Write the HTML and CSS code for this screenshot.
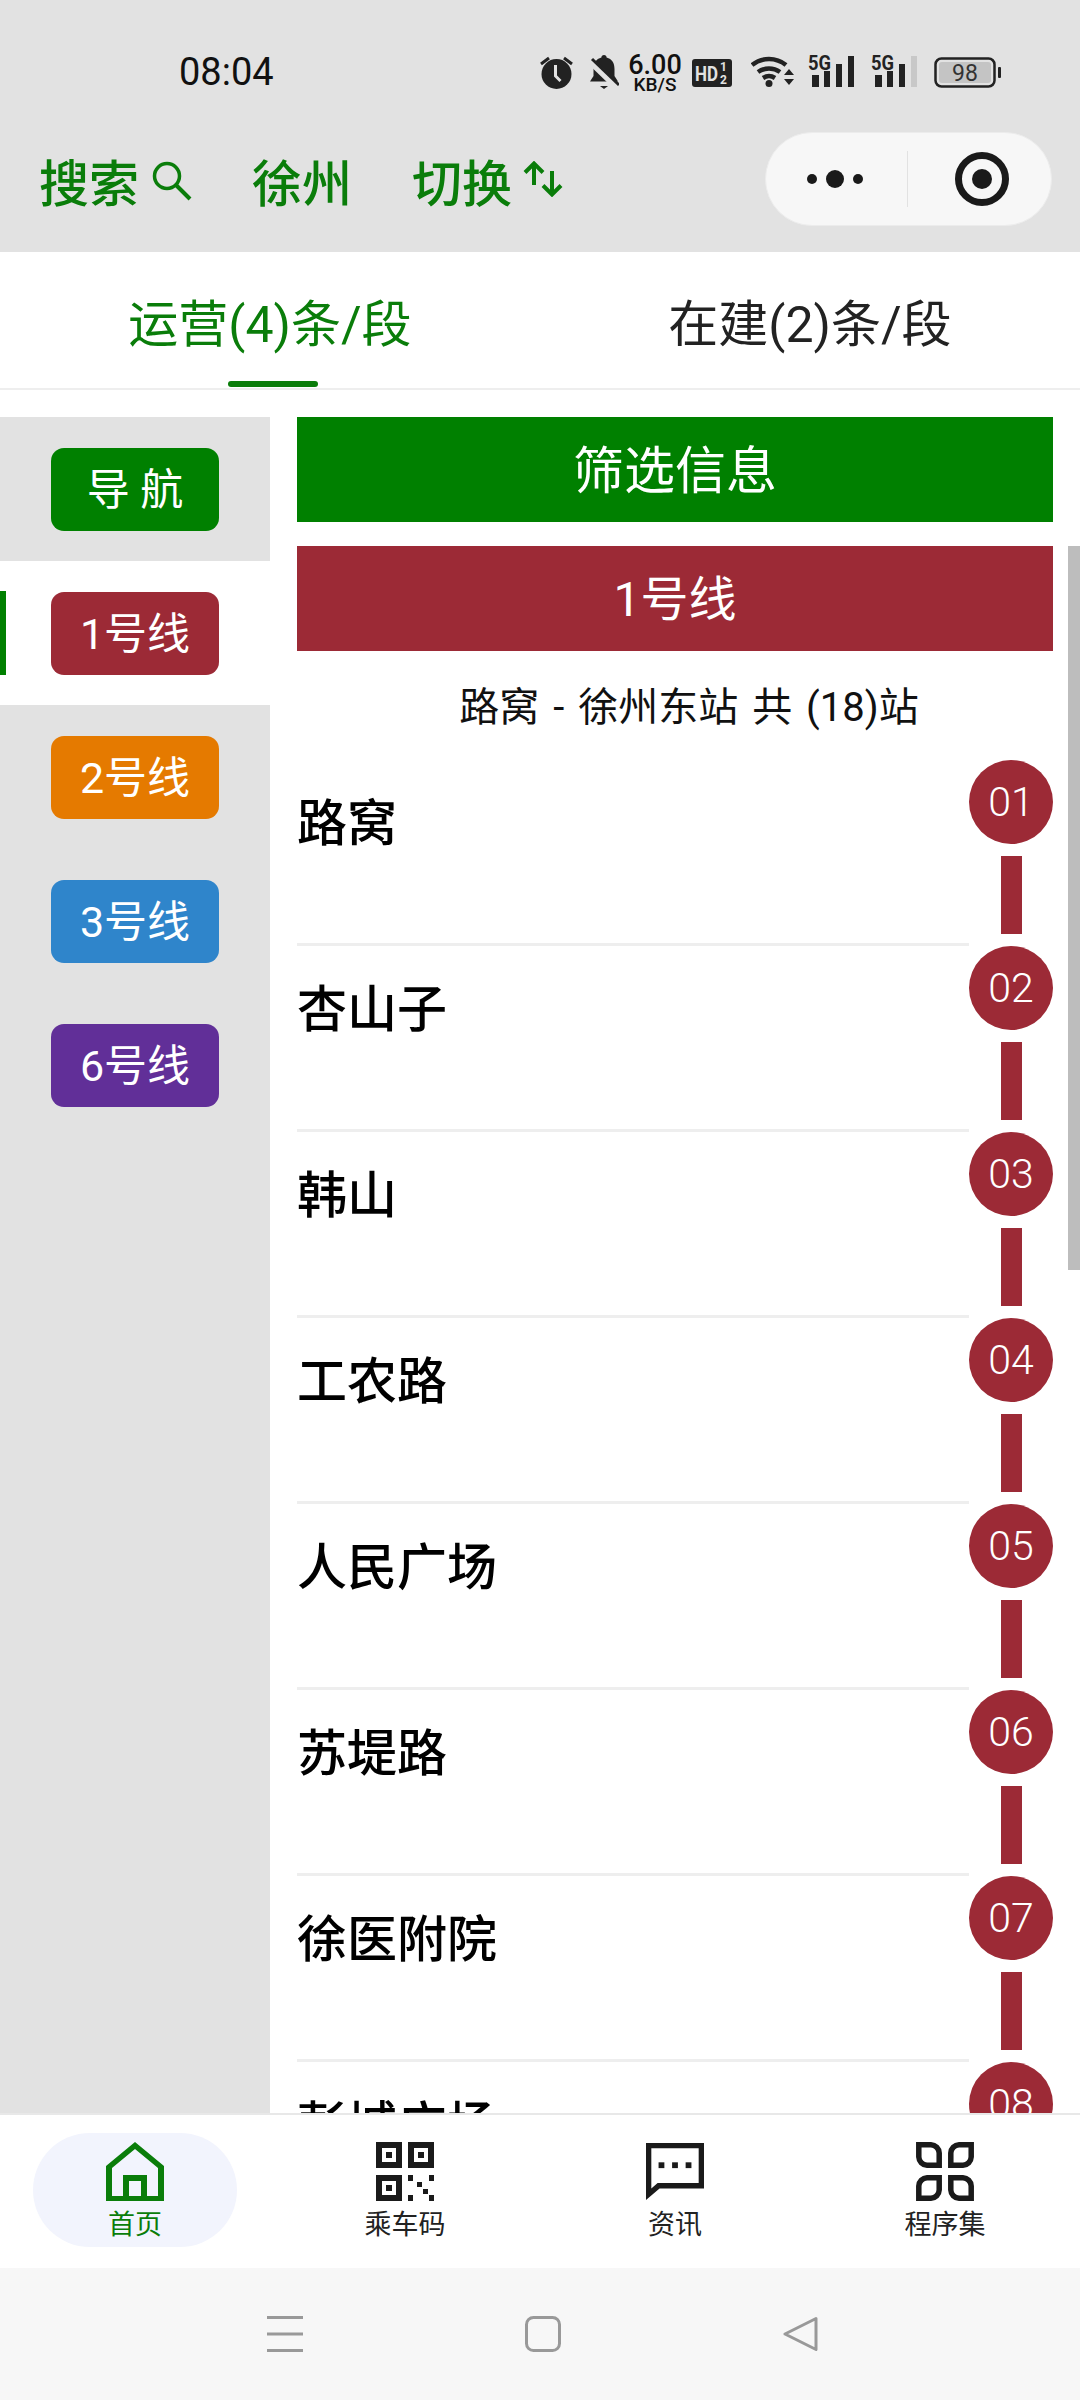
FILE: index.html
```html
<!DOCTYPE html>
<html lang="zh-CN">
<head>
    <meta charset="UTF-8">
    <meta name="viewport" content="width=device-width, initial-scale=1.0">
    <title>徐州地铁</title>
    <link rel="stylesheet" href="styles.css">
</head>
<body>

    <!-- Barra de status + cabeçalho -->
    <div class="topo">
        <div class="status">
            <span class="hora">08:04</span>
            <div class="status-icones">
                <svg class="ic-alarme" viewBox="0 0 33 34"><circle cx="16.500" cy="19" r="15" fill="#222"/><path d="M1 9 9 3M24 3l8 6" stroke="#222" stroke-width="3" fill="none"/><path d="M15.500 10v11l5 5" stroke="#e2e2e2" stroke-width="3" fill="none"/></svg>
                <svg class="ic-sino" viewBox="0 0 30 34"><path d="M15 0c1.600 0 2.600 1 2.600 2.600C23 4 25.500 8 25.500 14v7l3.500 5.500H1L4.500 21v-7C4.500 8 7 4 12.400 2.600 12.400 1 13.400 0 15 0z" fill="#222"/><path d="M11 31h8l-4 3z" fill="#222"/><path d="M0 5 27 31" stroke="#e2e2e2" stroke-width="7"/><path d="M3 4 30 30" stroke="#222" stroke-width="3"/></svg>
                <div class="velocidade"><span class="vel-num">6.00</span><span class="vel-un">KB/S</span></div>
                <svg class="ic-hd" viewBox="0 0 40 28"><rect width="40" height="28" rx="3" fill="#222"/><text x="3" y="22" font-size="21" font-weight="700" fill="#e2e2e2" textLength="23" lengthAdjust="spacingAndGlyphs">HD</text><text x="28" y="12" font-size="12" font-weight="700" fill="#e2e2e2">1</text><text x="28" y="25" font-size="12" font-weight="700" fill="#e2e2e2">2</text></svg>
                <svg class="ic-wifi" viewBox="0 0 44 33"><g fill="none" stroke="#222" stroke-width="4.500"><path d="M1 11A27 27 0 0 1 35 11"/><path d="M7 18A19 19 0 0 1 29 18"/><path d="M12 24A11 11 0 0 1 24 24"/></g><circle cx="18" cy="29.500" r="3.500" fill="#222"/><path d="M33 21 38 15 43 21zM33 25 38 31 43 25z" fill="#222"/></svg>
                <svg class="ic-sinal" viewBox="0 0 46 33"><text x="0" y="16" font-size="20" font-weight="700" fill="#222" textLength="23" lengthAdjust="spacingAndGlyphs">5G</text><g fill="#222"><rect x="4" y="21" width="7" height="12"/><rect x="16" y="17" width="6" height="16"/><rect x="28" y="10" width="6" height="23"/><rect x="40" y="2" width="6" height="31"/></g></svg>
                <svg class="ic-sinal ic-sinal2" viewBox="0 0 46 33"><text x="0" y="16" font-size="20" font-weight="700" fill="#222" textLength="23" lengthAdjust="spacingAndGlyphs">5G</text><g fill="#222"><rect x="4" y="21" width="7" height="12"/><rect x="16" y="17" width="6" height="16"/><rect x="28" y="10" width="6" height="23"/></g><rect x="40" y="2" width="6" height="31" fill="#c8c8c8"/></svg>
                <svg class="ic-bateria" viewBox="0 0 67 31"><rect x="1.500" y="1.500" width="59" height="28" rx="6" fill="none" stroke="#222" stroke-width="2.500"/><rect x="5" y="5" width="52" height="21" rx="3" fill="#c4c4c4"/><rect x="64" y="10" width="3" height="11" rx="1" fill="#222"/><text x="31" y="24" font-size="23" fill="#333" text-anchor="middle">98</text></svg>
            </div>
        </div>
        <div class="cabecalho">
            <span class="link-topo">搜索</span>
            <svg class="ic-busca" viewBox="0 0 40 40"><circle cx="15" cy="15" r="12.500" fill="none" stroke="#0a7d0a" stroke-width="3.500"/><path d="M24 24 38 38" stroke="#0a7d0a" stroke-width="4"/></svg>
            <span class="link-topo cidade">徐州</span>
            <span class="link-topo trocar">切换</span>
            <svg class="ic-trocar" viewBox="0 0 40 36"><g fill="none" stroke="#0a7d0a" stroke-width="4"><path d="M11 3V24M2 11.500 11 2.500l9 9"/><path d="M29 10V33M20 24.500l9 9 9-9"/></g></svg>
            <div class="capsula">
                <svg class="ic-pontos" viewBox="0 0 56 20"><circle cx="5" cy="10" r="5" fill="#1a1a1a"/><circle cx="28" cy="10" r="9" fill="#1a1a1a"/><circle cx="51" cy="10" r="5" fill="#1a1a1a"/></svg>
                <span class="divisor"></span>
                <svg class="ic-alvo" viewBox="0 0 54 54"><circle cx="27" cy="27" r="23.500" fill="none" stroke="#1a1a1a" stroke-width="7"/><circle cx="27" cy="27" r="10" fill="#1a1a1a"/></svg>
            </div>
        </div>
    </div>

    <!-- Abas -->
    <div class="abas">
        <div class="aba ativa">运营(4)条/段</div>
        <div class="aba">在建(2)条/段</div>
    </div>

    <div class="principal">
        <!-- Menu lateral -->
        <div class="lateral">
            <div class="item-lateral"><span class="botao-linha verde">导 航</span></div>
            <div class="item-lateral selecionado"><span class="botao-linha vermelho">1号线</span></div>
            <div class="item-lateral"><span class="botao-linha laranja">2号线</span></div>
            <div class="item-lateral"><span class="botao-linha azul">3号线</span></div>
            <div class="item-lateral"><span class="botao-linha roxo">6号线</span></div>
        </div>

        <!-- Lista de estações -->
        <div class="conteudo">
            <div class="faixa faixa-filtro verde">筛选信息</div>
            <div class="faixa vermelho">1号线</div>
            <div class="resumo">路窝 - 徐州东站 共 (18)站</div>

            <div class="estacao"><div class="nome">路窝</div><div class="trilho"><span class="numero">01</span><span class="ligacao"></span></div></div>
            <div class="estacao"><div class="nome">杏山子</div><div class="trilho"><span class="numero">02</span><span class="ligacao"></span></div></div>
            <div class="estacao"><div class="nome">韩山</div><div class="trilho"><span class="numero">03</span><span class="ligacao"></span></div></div>
            <div class="estacao"><div class="nome">工农路</div><div class="trilho"><span class="numero">04</span><span class="ligacao"></span></div></div>
            <div class="estacao"><div class="nome">人民广场</div><div class="trilho"><span class="numero">05</span><span class="ligacao"></span></div></div>
            <div class="estacao"><div class="nome">苏堤路</div><div class="trilho"><span class="numero">06</span><span class="ligacao"></span></div></div>
            <div class="estacao"><div class="nome">徐医附院</div><div class="trilho"><span class="numero">07</span><span class="ligacao"></span></div></div>
            <div class="estacao"><div class="nome">彭城广场</div><div class="trilho"><span class="numero">08</span><span class="ligacao"></span></div></div>
        </div>

        <div class="rolagem"></div>
    </div>

    <!-- Barra inferior -->
    <div class="rodape">
        <div class="tab tab-ativa">
            <svg class="ic-tab" viewBox="0 0 58 59"><path fill-rule="evenodd" fill="#0a7d0a" d="M29 0 58 24V59H0V24ZM29 7 6 26V54H17V33H41V54H52V26ZM23 39H35V54H23Z"/></svg>
            <span>首页</span>
        </div>
        <div class="tab">
            <svg class="ic-tab" viewBox="0 0 58 59"><g fill="none" stroke="#1a1a1a" stroke-width="6"><rect x="3" y="3" width="20" height="20"/><rect x="35" y="3" width="20" height="20"/><rect x="3" y="36" width="20" height="20"/></g><g fill="#1a1a1a"><rect x="10" y="10" width="6" height="6"/><rect x="42" y="10" width="6" height="6"/><rect x="10" y="43" width="6" height="6"/><rect x="32" y="33" width="5" height="6"/><rect x="53" y="33" width="5" height="6"/><rect x="41" y="40" width="5" height="5"/><rect x="47" y="47" width="5" height="5"/><rect x="32" y="53" width="5" height="6"/><rect x="53" y="53" width="5" height="6"/></g></svg>
            <span>乘车码</span>
        </div>
        <div class="tab">
            <svg class="ic-tab" viewBox="0 0 60 59"><path fill-rule="evenodd" fill="#1a1a1a" d="M0 0H60V47H14L0 59ZM5.500 5.500V47L12 41.500H54.500V5.500Z"/><g fill="#1a1a1a"><rect x="13" y="20" width="6" height="6"/><rect x="27" y="20" width="6" height="6"/><rect x="41" y="20" width="6" height="6"/></g></svg>
            <span>资讯</span>
        </div>
        <div class="tab">
            <svg class="ic-tab" viewBox="0 0 58 59"><g fill="none" stroke="#1a1a1a" stroke-width="5.500"><path d="M2.800 2.800H15A8.500 8.500 0 0 1 23.200 11V23.200H11A8.500 8.500 0 0 1 2.800 15Z"/><path d="M55.200 2.800H43A8.500 8.500 0 0 0 34.800 11V23.200H47A8.500 8.500 0 0 0 55.200 15Z"/><path d="M2.800 56.200H15A8.500 8.500 0 0 0 23.200 48V35.800H11A8.500 8.500 0 0 0 2.800 44Z"/><path d="M55.200 56.200H43A8.500 8.500 0 0 1 34.800 48V35.800H47A8.500 8.500 0 0 1 55.200 44Z"/></g></svg>
            <span>程序集</span>
        </div>
    </div>

    <!-- Barra de navegação do sistema -->
    <div class="navegacao">
        <svg class="ic-nav" viewBox="0 0 36 36"><path d="M0 1.500H36M0 18H36M0 34.500H36" stroke="#999" stroke-width="3"/></svg>
        <svg class="ic-nav" viewBox="0 0 36 36"><rect x="1.500" y="1.500" width="33" height="33" rx="7" fill="none" stroke="#999" stroke-width="3"/></svg>
        <svg class="ic-nav" viewBox="0 0 36 36"><path d="M33 2.500 2 18 33 33.500Z" fill="none" stroke="#999" stroke-width="3" stroke-linejoin="round"/></svg>
    </div>

</body>
</html>
```

FILE: styles.css
```css
* { margin: 0; padding: 0; box-sizing: border-box; font-family: Roboto, "Noto Sans CJK SC", sans-serif; }
svg { display: block; flex-shrink: 0; }
svg text { font-family: Roboto, sans-serif; }
body { width: 1080px; height: 2400px; overflow: hidden; background: #fff; color: #000; display: flex; flex-direction: column; }

/* topo */
.topo { background: #e2e2e2; height: 252px; flex-shrink: 0; }
.status { height: 132px; display: flex; align-items: flex-start; padding: 54px 79px 0 179px; }
.hora { font-size: 38px; line-height: 36px; color: #111; }
.status-icones { margin-left: auto; display: flex; align-items: flex-start; }
.ic-alarme { width: 33px; height: 34px; margin-top: 1px; }
.ic-sino { width: 30px; height: 34px; margin-top: 1px; margin-left: 16px; }
.velocidade { width: 50px; margin-left: 11px; display: flex; flex-direction: column; align-items: center; color: #111; }
.vel-num { font-size: 27px; font-weight: 500; line-height: 23px; }
.vel-un { font-size: 19px; font-weight: 500; line-height: 15px; }
.ic-hd { width: 40px; height: 28px; margin-left: 12px; margin-top: 5px; }
.ic-wifi { width: 44px; height: 33px; margin-left: 19px; }
.ic-sinal { width: 46px; height: 33px; margin-left: 13px; overflow: visible; }
.ic-sinal2 { margin-left: 17px; }
.ic-bateria { width: 67px; height: 31px; margin-left: 17px; margin-top: 3px; }

.cabecalho { height: 94px; display: flex; align-items: center; padding-left: 39px; }
.link-topo { color: #0a7d0a; font-size: 50px; font-weight: 500; line-height: 94px; padding-top: 12px; }
.ic-busca { width: 40px; height: 40px; margin-left: 13px; margin-top: 4px; }
.cidade { margin-left: 60px; }
.trocar { margin-left: 60px; }
.ic-trocar { width: 40px; height: 36px; margin-left: 11px; margin-top: 0; }
.capsula { width: 287px; height: 94px; margin-left: auto; margin-right: 28px; border-radius: 47px; background: #f7f7f7; border: 1px solid #ececec; display: flex; align-items: center; padding-left: 41px; }
.ic-pontos { width: 56px; height: 20px; }
.divisor { width: 1px; height: 56px; background: #e2e2e2; margin-left: 44px; }
.ic-alvo { width: 54px; height: 54px; margin-left: 47px; }

/* abas */
.abas { height: 138px; flex-shrink: 0; display: flex; border-bottom: 2px solid #eee; }
.aba { position: relative; width: 540px; text-align: center; font-size: 50px; line-height: 130px; padding-top: 8px; color: #222; }
.ativa { color: #0a7d0a; }
.ativa::after { content: ""; position: absolute; left: 228px; bottom: 1px; width: 90px; height: 6px; border-radius: 3px; background: #0a7d0a; }

/* principal */
.principal { position: relative; flex: 1; min-height: 0; overflow: hidden; display: flex; padding-top: 27px; }
.lateral { width: 270px; flex-shrink: 0; background: #e2e2e2; }
.item-lateral { position: relative; height: 144px; display: flex; align-items: center; padding-left: 51px; }
.selecionado { background: #fff; }
.selecionado::before { content: ""; position: absolute; left: 0; top: 30px; width: 6px; height: 84px; background: #008000; }
.botao-linha { width: 168px; height: 83px; border-radius: 13px; color: #fff; font-size: 43px; line-height: 85px; text-align: center; }
.verde { background: #008000; }
.vermelho { background: #9c2a36; }
.laranja { background: #e57a00; }
.azul { background: #2f85cb; }
.roxo { background: #612f98; }

.conteudo { width: 756px; margin-left: 27px; }
.faixa { height: 105px; color: #fff; font-size: 48px; line-height: 108px; text-align: center; margin-bottom: 24px; }
.faixa-filtro { font-size: 51px; line-height: 110px; }
.resumo { height: 109px; margin-top: -24px; padding: 27px 0 0 28px; font-size: 40px; line-height: 60px; word-spacing: 4px; text-align: center; color: #111; }

.estacao { height: 186px; display: flex; }
.nome { flex: 1; height: 186px; border-bottom: 3px solid #eee; font-size: 50px; font-weight: 500; line-height: 60px; padding-top: 34px; }
.trilho { width: 84px; display: flex; flex-direction: column; align-items: center; }
.numero { width: 84px; height: 84px; border-radius: 50%; background: #9c2a36; color: #fff; font-size: 41px; font-weight: 300; line-height: 84px; text-align: center; }
.ligacao { width: 21px; height: 78px; margin-top: 12px; background: #9c2a36; }
.rolagem { position: absolute; right: 0; top: 156px; width: 12px; height: 724px; background: #bdbdbd; }

/* rodape */
.rodape { height: 155px; flex-shrink: 0; display: flex; background: #fff; border-top: 2px solid #e8e8e8; padding-top: 18px; }
.tab { width: 204px; height: 114px; margin: 0 33px; display: flex; flex-direction: column; align-items: center; padding-top: 9px; border-radius: 57px; font-size: 27px; color: #222; }
.tab span { line-height: 32px; margin-top: 8px; }
.tab-ativa { background: #f2f4fd; color: #0a7d0a; }
.ic-tab { width: 58px; height: 59px; }

.navegacao { height: 132px; flex-shrink: 0; background: #f7f7f7; display: flex; justify-content: center; gap: 222px; padding: 48px 0 0 6px; }
.ic-nav { width: 36px; height: 36px; }
```
